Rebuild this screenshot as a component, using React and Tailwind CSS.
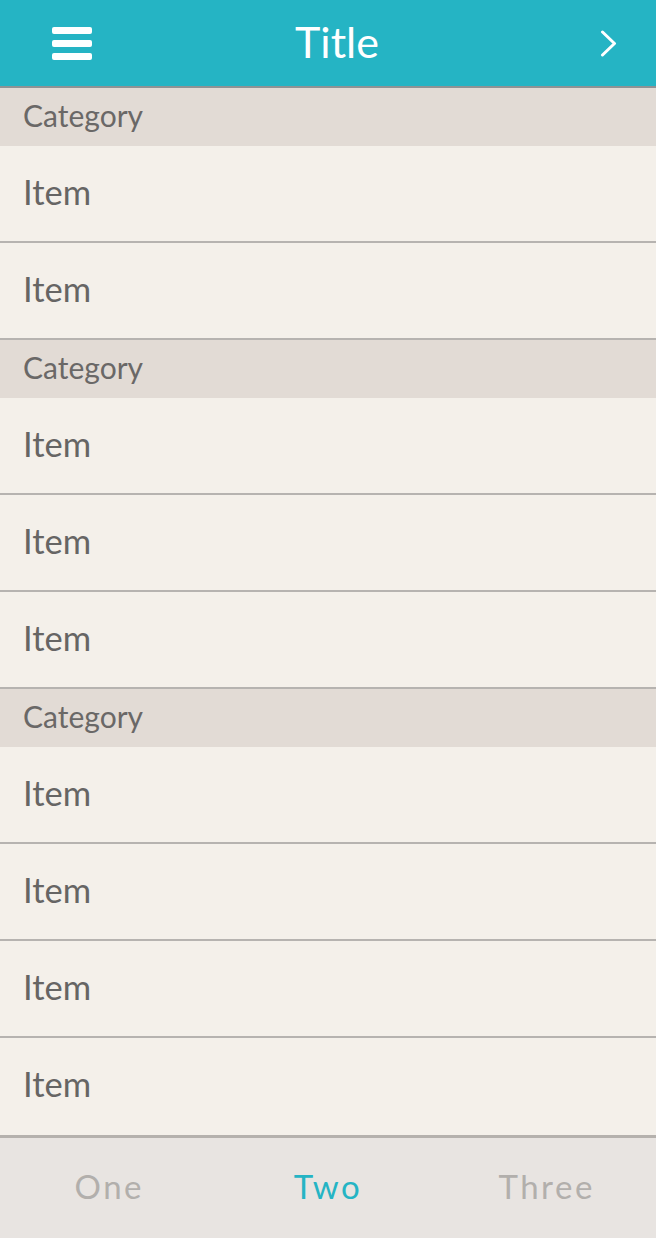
import React from "react";

const sections = [
  { title: "Category", items: ["Item", "Item"] },
  { title: "Category", items: ["Item", "Item", "Item"] },
  { title: "Category", items: ["Item", "Item", "Item", "Item"] },
];

const tabs = ["One", "Two", "Three"];

const font = { fontFamily: "Lato, 'Open Sans', sans-serif" };

export default function App() {
  return (
    <div className="w-[656px] h-[1238px] flex flex-col bg-[#f4f0ea] overflow-hidden" style={font}>
      <header className="h-[88px] shrink-0 flex items-center bg-[#25b4c4] border-b-2 border-[#8e9395] text-white">
        <div className="w-[140px] pl-[52px] flex flex-col gap-[6px]">
          <span className="block w-[40px] h-[7px] rounded-[2px] bg-white" />
          <span className="block w-[40px] h-[7px] rounded-[2px] bg-white" />
          <span className="block w-[40px] h-[7px] rounded-[2px] bg-white" />
        </div>
        <h1 className="flex-1 text-center text-[43px] font-normal leading-none pl-[18px] pb-[4px]">Title</h1>
        <div className="w-[140px] flex justify-end pr-[38px]">
          <svg width="18" height="27" viewBox="0 0 18 27" fill="none">
            <path d="M2.5 2 L14.5 13.5 L2.5 25" stroke="white" strokeWidth="3" strokeLinecap="round" strokeLinejoin="round" />
          </svg>
        </div>
      </header>

      <main className="flex-1 flex flex-col">
        {sections.map((section, i) => (
          <section key={i} className="flex flex-col">
            <div className="h-[58px] flex items-center px-[23px] pb-[3px] bg-[#e2dbd5] text-[30px] text-[#6a6867]">
              {section.title}
            </div>
            {section.items.map((item, j) => (
              <div
                key={j}
                className={
                  i === sections.length - 1 && j === section.items.length - 1
                    ? "h-[96px] flex items-center px-[23px] pb-[4px] text-[34.5px] text-[#666564]"
                    : "h-[97px] flex items-center px-[23px] pb-[4px] text-[34.5px] text-[#666564] border-b-2 border-[#b6b3b0]"
                }
              >
                {item}
              </div>
            ))}
          </section>
        ))}
      </main>

      <nav className="h-[103px] shrink-0 grid grid-cols-3 bg-[#e8e4e1] border-t-[3px] border-[#b5b1ad]">
        {tabs.map((tab) => (
          <div
            key={tab}
            className={
              tab === "Two"
                ? "flex items-center justify-center pb-[2px] text-[33px] tracking-[2.5px] text-[#25b4c4]"
                : "flex items-center justify-center pb-[2px] text-[33px] tracking-[2.5px] text-[#b2afac]"
            }
          >
            {tab}
          </div>
        ))}
      </nav>
    </div>
  );
}
